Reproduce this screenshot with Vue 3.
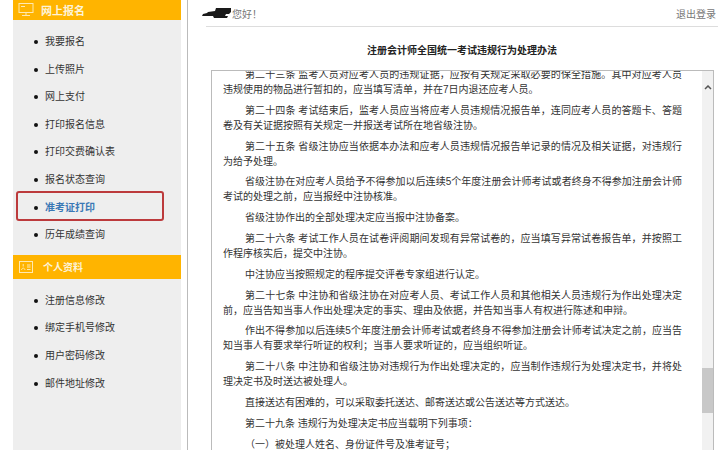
<script setup>
const applyMenu = ['我要报名', '上传照片', '网上支付', '打印报名信息', '打印交费确认表', '报名状态查询', '准考证打印', '历年成绩查询']
const profileMenu = ['注册信息修改', '绑定手机号修改', '用户密码修改', '邮件地址修改']

const paragraphs = [
  ['第二十三条 监考人员对应考人员的违规证据，应按有关规定采取必要的保全措施。其中对应考人员', '违规使用的物品进行暂扣的，应当填写清单，并在7日内退还应考人员。'],
  ['第二十四条 考试结束后，监考人员应当将应考人员违规情况报告单，连同应考人员的答题卡、答题', '卷及有关证据按照有关规定一并报送考试所在地省级注协。'],
  ['第二十五条 省级注协应当依据本办法和应考人员违规情况报告单记录的情况及相关证据，对违规行', '为给予处理。'],
  ['省级注协在对应考人员给予不得参加以后连续5个年度注册会计师考试或者终身不得参加注册会计师', '考试的处理之前，应当报经中注协核准。'],
  ['省级注协作出的全部处理决定应当报中注协备案。'],
  ['第二十六条 考试工作人员在试卷评阅期间发现有异常试卷的，应当填写异常试卷报告单，并按照工', '作程序核实后，提交中注协。'],
  ['中注协应当按照规定的程序提交评卷专家组进行认定。'],
  ['第二十七条 中注协和省级注协在对应考人员、考试工作人员和其他相关人员违规行为作出处理决定', '前，应当告知当事人作出处理决定的事实、理由及依据，并告知当事人有权进行陈述和申辩。'],
  ['作出不得参加以后连续5个年度注册会计师考试或者终身不得参加注册会计师考试决定之前，应当告', '知当事人有要求举行听证的权利；当事人要求听证的，应当组织听证。'],
  ['第二十八条 中注协和省级注协对违规行为作出处理决定的，应当制作违规行为处理决定书，并将处', '理决定书及时送达被处理人。'],
  ['直接送达有困难的，可以采取委托送达、邮寄送达或公告送达等方式送达。'],
  ['第二十九条 违规行为处理决定书应当载明下列事项：'],
  ['（一）被处理人姓名、身份证件号及准考证号；']
]
</script>

<template>
  <div class="page">
    <aside class="sidebar">
      <div class="side-head first">
        <svg class="head-icon" viewBox="0 0 16 13" width="16" height="13">
          <rect x="1" y="0.5" width="14" height="9" fill="none" stroke="#ffe9b0" stroke-width="1" />
          <path d="M8 10v2M4 12.5h8M3 3.5h4" stroke="#ffe9b0" stroke-width="1" fill="none" />
        </svg>
        <span>网上报名</span>
      </div>
      <ul class="menu">
        <li v-for="item in applyMenu" :key="item" :class="{ active: item === '准考证打印' }">{{ item }}</li>
      </ul>
      <div class="side-head second">
        <svg class="head-icon" viewBox="0 0 14 12" width="14" height="12">
          <rect x="0.5" y="0.5" width="13" height="11" fill="none" stroke="#ffe9b0" stroke-width="1" />
          <path d="M2.5 9c.5-2.5 3-2.500 3.500 0M4.200 3v2.500M8 4h3.500M8 6h3.500M8 8.500h3.500" stroke="#ffe9b0" stroke-width="1" fill="none" />
        </svg>
        <span>个人资料</span>
      </div>
      <ul class="menu">
        <li v-for="item in profileMenu" :key="item">{{ item }}</li>
      </ul>
    </aside>

    <main class="main">
      <header class="top">
        <div class="greet">
          <svg class="scribble" viewBox="0 0 29 10" width="29" height="10">
            <path d="M14 0 L29 0 L29 4 L27 6 L24 6 L23 8 L26 8 L25 10 L12 10 L11 8 L0 8 L1 6 L5 5 L6 4 L13 3 Z" fill="#1a1a1a" />
          </svg>
          <span>您好！</span>
        </div>
        <span class="logout">退出登录</span>
      </header>

      <h1 class="title">注册会计师全国统一考试违规行为处理办法</h1>

      <section class="doc">
        <div class="doc-text">
          <p v-for="(lines, i) in paragraphs" :key="i">
            <span v-for="(line, j) in lines" :key="j" class="line" :class="{ indent: j === 0, fill: j < lines.length - 1 }">{{ line }}</span>
          </p>
        </div>
        <div class="scrollbar">
          <svg class="arrow" viewBox="0 0 8 5" width="8" height="5">
            <path d="M1 4l3-3 3 3" fill="none" stroke="#555" stroke-width="1.5" />
          </svg>
          <div class="thumb"></div>
        </div>
      </section>
    </main>
  </div>
</template>

<style scoped>
.page {
  width: 722px;
  height: 450px;
  display: flex;
  overflow: hidden;
  background: #fff;
  color: #333;
  font-family: "Liberation Sans", "Noto Sans CJK SC", sans-serif;
}

.sidebar {
  width: 168px;
  margin-left: 13px;
  background: #eee;
  flex-shrink: 0;
}

.side-head {
  height: 24px;
  background: #ffb400;
  color: #fdf3d8;
  display: flex;
  align-items: center;
  font-size: 11px;
  font-weight: bold;
}

.side-head.first {
  height: 20px;
  padding: 0 0 1px 5px;
  box-sizing: border-box;
  gap: 7px;
}

.side-head.second {
  padding-left: 6px;
  gap: 10px;
  font-size: 10px;
}

.menu {
  list-style: none;
  margin: 0;
  padding: 8px 0 6px 0;
}

.menu li {
  position: relative;
  height: 27.6px;
  line-height: 27.6px;
  padding-left: 32px;
  font-size: 10px;
  color: #333;
}

.menu li::before {
  content: "";
  position: absolute;
  left: 21px;
  top: 12px;
  width: 4px;
  height: 4px;
  border-radius: 50%;
  background: #111;
}

.menu li.active {
  color: #3a78b5;
  font-weight: bold;
}

.menu li.active::after {
  content: "";
  position: absolute;
  left: 3px;
  top: -3px;
  width: 148px;
  height: 30px;
  box-sizing: border-box;
  border: 2px solid #bc3a3c;
  border-radius: 3px;
}

.main {
  flex: 1;
  margin-left: 6px;
  border-left: 1px solid #bbb;
  padding: 0 4px 0 18px;
  min-width: 0;
}

.top {
  height: 26px;
  border-bottom: 1px solid #ddd;
  display: flex;
  justify-content: space-between;
  align-items: center;
  font-size: 10px;
  color: #777;
  padding-right: 2px;
}

.greet {
  display: flex;
  align-items: center;
  gap: 1px;
  margin-left: -4px;
  font-size: 10px;
}

.title {
  margin: 17px 0 0;
  height: 26px;
  font-size: 10px;
  line-height: 13px;
  font-weight: bold;
  text-align: center;
  color: #222;
}

.doc {
  height: 380px;
  margin: 0 4px 0 5px;
  border: 1px solid #bbb;
  border-bottom: none;
  display: flex;
  overflow: hidden;
}

.doc-text {
  flex: 1;
  min-width: 0;
  padding: 0 20px 0 11px;
  margin-top: -4px;
  font-size: 10px;
  line-height: 15px;
  color: #333;
}

.doc-text p {
  margin: 0 0 5.8px;
}

.line {
  display: block;
  white-space: nowrap;
}

.line.indent {
  padding-left: 22px;
}

.line.fill {
  white-space: normal;
  text-align: justify;
  text-align-last: justify;
}

.scrollbar {
  width: 11px;
  flex-shrink: 0;
  background: #f1f1f1;
  position: relative;
}

.arrow {
  position: absolute;
  left: 2px;
  top: 14px;
}

.thumb {
  position: absolute;
  left: 0;
  right: 0;
  top: 297px;
  height: 45px;
  background: #c8c8c8;
}
</style>
